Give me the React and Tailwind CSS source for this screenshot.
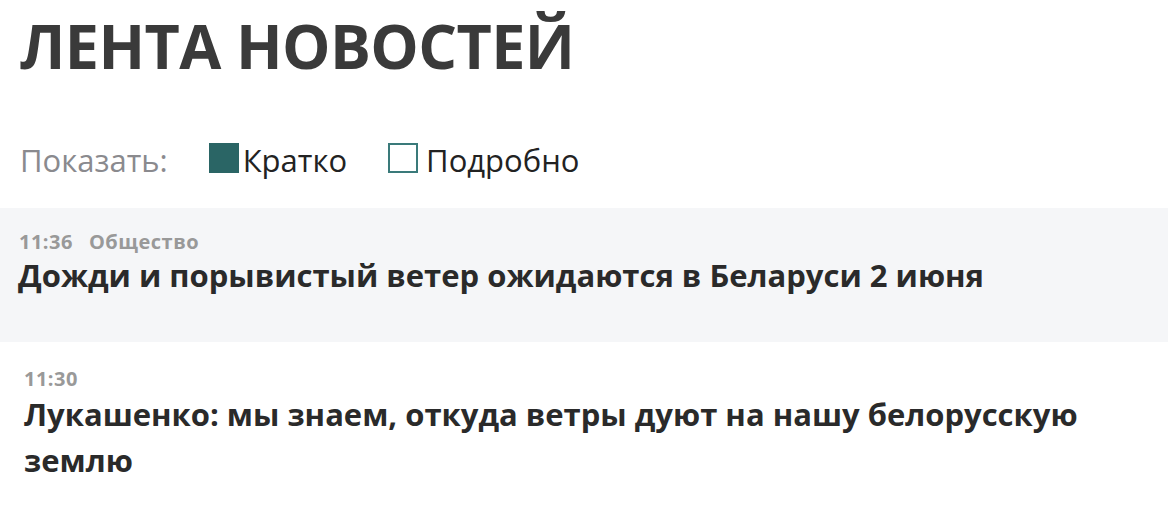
export default function App() {
    const font = { fontFamily: '"Open Sans", "Noto Sans", sans-serif' };

    return (
        <div className="w-[1172px] h-[530px] bg-white overflow-hidden" style={font}>
            {/* Title */}
            <h1 className="pl-5 pt-[6px] text-[61px] leading-[80px] font-bold text-[#3a3a3a] tracking-[-0.6px]">
                ЛЕНТА НОВОСТЕЙ
            </h1>

            {/* View switch */}
            <div className="flex items-center pl-5 mt-[54px] h-[40px] text-[31px] leading-[40px]">
                <span className="text-[#8a8a8e]">Показать:</span>
                <label className="flex items-center ml-[41px] text-[#222]">
                    <span className="w-[30px] h-[30px] bg-[#2a6565] mr-[4px] mb-[4px]"></span>
                    Кратко
                </label>
                <label className="flex items-center ml-[41px] text-[#222]">
                    <span className="w-[30px] h-[30px] border-2 border-[#3a7a7a] mr-[8px] mb-[4px]"></span>
                    Подробно
                </label>
            </div>

            {/* News feed */}
            <div className="mt-[28px] w-[1168px]">
                <div className="bg-[#f5f6f8] h-[134px] pl-[18px] pt-[22px]">
                    <div className="flex gap-[16px] text-[20px] font-bold text-[#999] leading-[24px] tracking-[0.5px] pl-[1px]">
                        <span>11:36</span>
                        <span>Общество</span>
                    </div>
                    <div className="mt-[1px] text-[31px] font-bold text-[#2a2a2a] leading-[40px]">
                        Дожди и порывистый ветер ожидаются в Беларуси 2 июня
                    </div>
                </div>
                <div className="pl-[24px] pt-[25px]">
                    <div className="text-[20px] font-bold text-[#999] leading-[24px] tracking-[0.5px]">11:30</div>
                    <div className="text-[31px] font-bold text-[#2a2a2a] leading-[46px] w-[1100px]">
                        Лукашенко: мы знаем, откуда ветры дуют на нашу белорусскую землю
                    </div>
                </div>
            </div>
        </div>
    );
}
